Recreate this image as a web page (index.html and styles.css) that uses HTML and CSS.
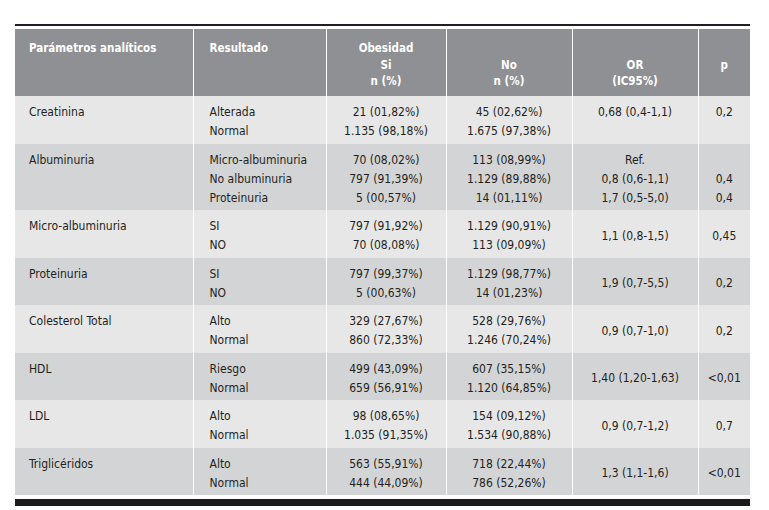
FILE: index.html
```html
<!DOCTYPE html>
<html lang="es">
<head>
<meta charset="utf-8">
<link rel="stylesheet" href="styles.css">
</head>
<body>
<div class="page">
  <div class="rule"></div>
  <table class="data">
    <colgroup>
      <col class="c-param"><col class="c-res"><col class="c-si"><col class="c-no"><col class="c-or"><col class="c-p">
    </colgroup>
    <thead>
      <tr>
        <th class="left">Parámetros analíticos</th>
        <th class="left">Resultado</th>
        <th class="center">Obesidad<br>Si<br>n (%)</th>
        <th class="center bottom">No<br>n (%)</th>
        <th class="center bottom">OR<br>(IC95%)</th>
        <th class="center middle">p</th>
      </tr>
    </thead>
    <tbody>
      <tr class="light">
        <td>Creatinina</td>
        <td>Alterada<br>Normal</td>
        <td class="num">21 (01,82%)<br>1.135 (98,18%)</td>
        <td class="num">45 (02,62%)<br>1.675 (97,38%)</td>
        <td class="num top">0,68 (0,4-1,1)</td>
        <td class="num top">0,2</td>
      </tr>
      <tr class="dark">
        <td>Albuminuria</td>
        <td>Micro-albuminuria<br>No albuminuria<br>Proteinuria</td>
        <td class="num">70 (08,02%)<br>797 (91,39%)<br>5 (00,57%)</td>
        <td class="num">113 (08,99%)<br>1.129 (89,88%)<br>14 (01,11%)</td>
        <td class="num">Ref.<br>0,8 (0,6-1,1)<br>1,7 (0,5-5,0)</td>
        <td class="num">&nbsp;<br>0,4<br>0,4</td>
      </tr>
      <tr class="light">
        <td>Micro-albuminuria</td>
        <td>SI<br>NO</td>
        <td class="num">797 (91,92%)<br>70 (08,08%)</td>
        <td class="num">1.129 (90,91%)<br>113 (09,09%)</td>
        <td class="num">1,1 (0,8-1,5)</td>
        <td class="num">0,45</td>
      </tr>
      <tr class="dark">
        <td>Proteinuria</td>
        <td>SI<br>NO</td>
        <td class="num">797 (99,37%)<br>5 (00,63%)</td>
        <td class="num">1.129 (98,77%)<br>14 (01,23%)</td>
        <td class="num">1,9 (0,7-5,5)</td>
        <td class="num">0,2</td>
      </tr>
      <tr class="light">
        <td>Colesterol Total</td>
        <td>Alto<br>Normal</td>
        <td class="num">329 (27,67%)<br>860 (72,33%)</td>
        <td class="num">528 (29,76%)<br>1.246 (70,24%)</td>
        <td class="num">0,9 (0,7-1,0)</td>
        <td class="num">0,2</td>
      </tr>
      <tr class="dark">
        <td>HDL</td>
        <td>Riesgo<br>Normal</td>
        <td class="num">499 (43,09%)<br>659 (56,91%)</td>
        <td class="num">607 (35,15%)<br>1.120 (64,85%)</td>
        <td class="num">1,40 (1,20-1,63)</td>
        <td class="num">&lt;0,01</td>
      </tr>
      <tr class="light">
        <td>LDL</td>
        <td>Alto<br>Normal</td>
        <td class="num">98 (08,65%)<br>1.035 (91,35%)</td>
        <td class="num">154 (09,12%)<br>1.534 (90,88%)</td>
        <td class="num">0,9 (0,7-1,2)</td>
        <td class="num">0,7</td>
      </tr>
      <tr class="dark">
        <td>Triglicéridos</td>
        <td>Alto<br>Normal</td>
        <td class="num">563 (55,91%)<br>444 (44,09%)</td>
        <td class="num">718 (22,44%)<br>786 (52,26%)</td>
        <td class="num">1,3 (1,1-1,6)</td>
        <td class="num">&lt;0,01</td>
      </tr>
    </tbody>
  </table>
  <div class="bar"></div>
</div>
</body>
</html>
```
FILE: styles.css
```css
html, body {
  margin: 0;
  padding: 0;
  background: #ffffff;
}

body {
  font-family: "DejaVu Sans Condensed", "Liberation Sans", sans-serif;
  color: #231f20;
}

.page {
  width: 735px;
  padding: 24px 0 0 15px;
}

.rule {
  height: 2px;
  background: #231f20;
  margin-bottom: 3px;
}

.data {
  width: 735px;
  border-collapse: collapse;
  table-layout: fixed;
}

.c-param { width: 178px; }
.c-res { width: 133px; }
.c-si { width: 120px; }
.c-no { width: 126px; }
.c-or { width: 126px; }
.c-p { width: 52px; }

.data th,
.data td {
  border-left: 1px solid #ffffff;
  padding: 0;
  white-space: nowrap;
}

.data th:first-child,
.data td:first-child {
  border-left: none;
}

.data th {
  background: #8e9093;
  color: #ffffff;
  font-weight: bold;
  font-size: 11.5px;
  line-height: 16.5px;
  padding: 11px 4px 6.5px;
  vertical-align: top;
  text-align: center;
}

.data th.left {
  text-align: left;
}

.data th:first-child {
  padding-left: 14px;
}

.data th:nth-child(2) {
  padding-left: 16px;
}

.data th.bottom {
  vertical-align: bottom;
}

.data th.middle {
  vertical-align: middle;
}

.data td {
  font-size: 12px;
  line-height: 19px;
  padding: 7px 4px 2.5px;
  vertical-align: top;
  text-align: left;
}

.data td:first-child {
  padding-left: 14px;
}

.data td:nth-child(2) {
  padding-left: 16px;
}

.data td.num {
  text-align: center;
}

.data td:nth-child(5),
.data td:nth-child(6) {
  vertical-align: middle;
}

.data td.top:nth-child(5),
.data td.top:nth-child(6) {
  vertical-align: top;
}

.light td {
  background: #e7e7e8;
}

.dark td {
  background: #d3d4d5;
}

.bar {
  height: 7px;
  margin-top: 4px;
  background: #1c1a1b;
}
```
